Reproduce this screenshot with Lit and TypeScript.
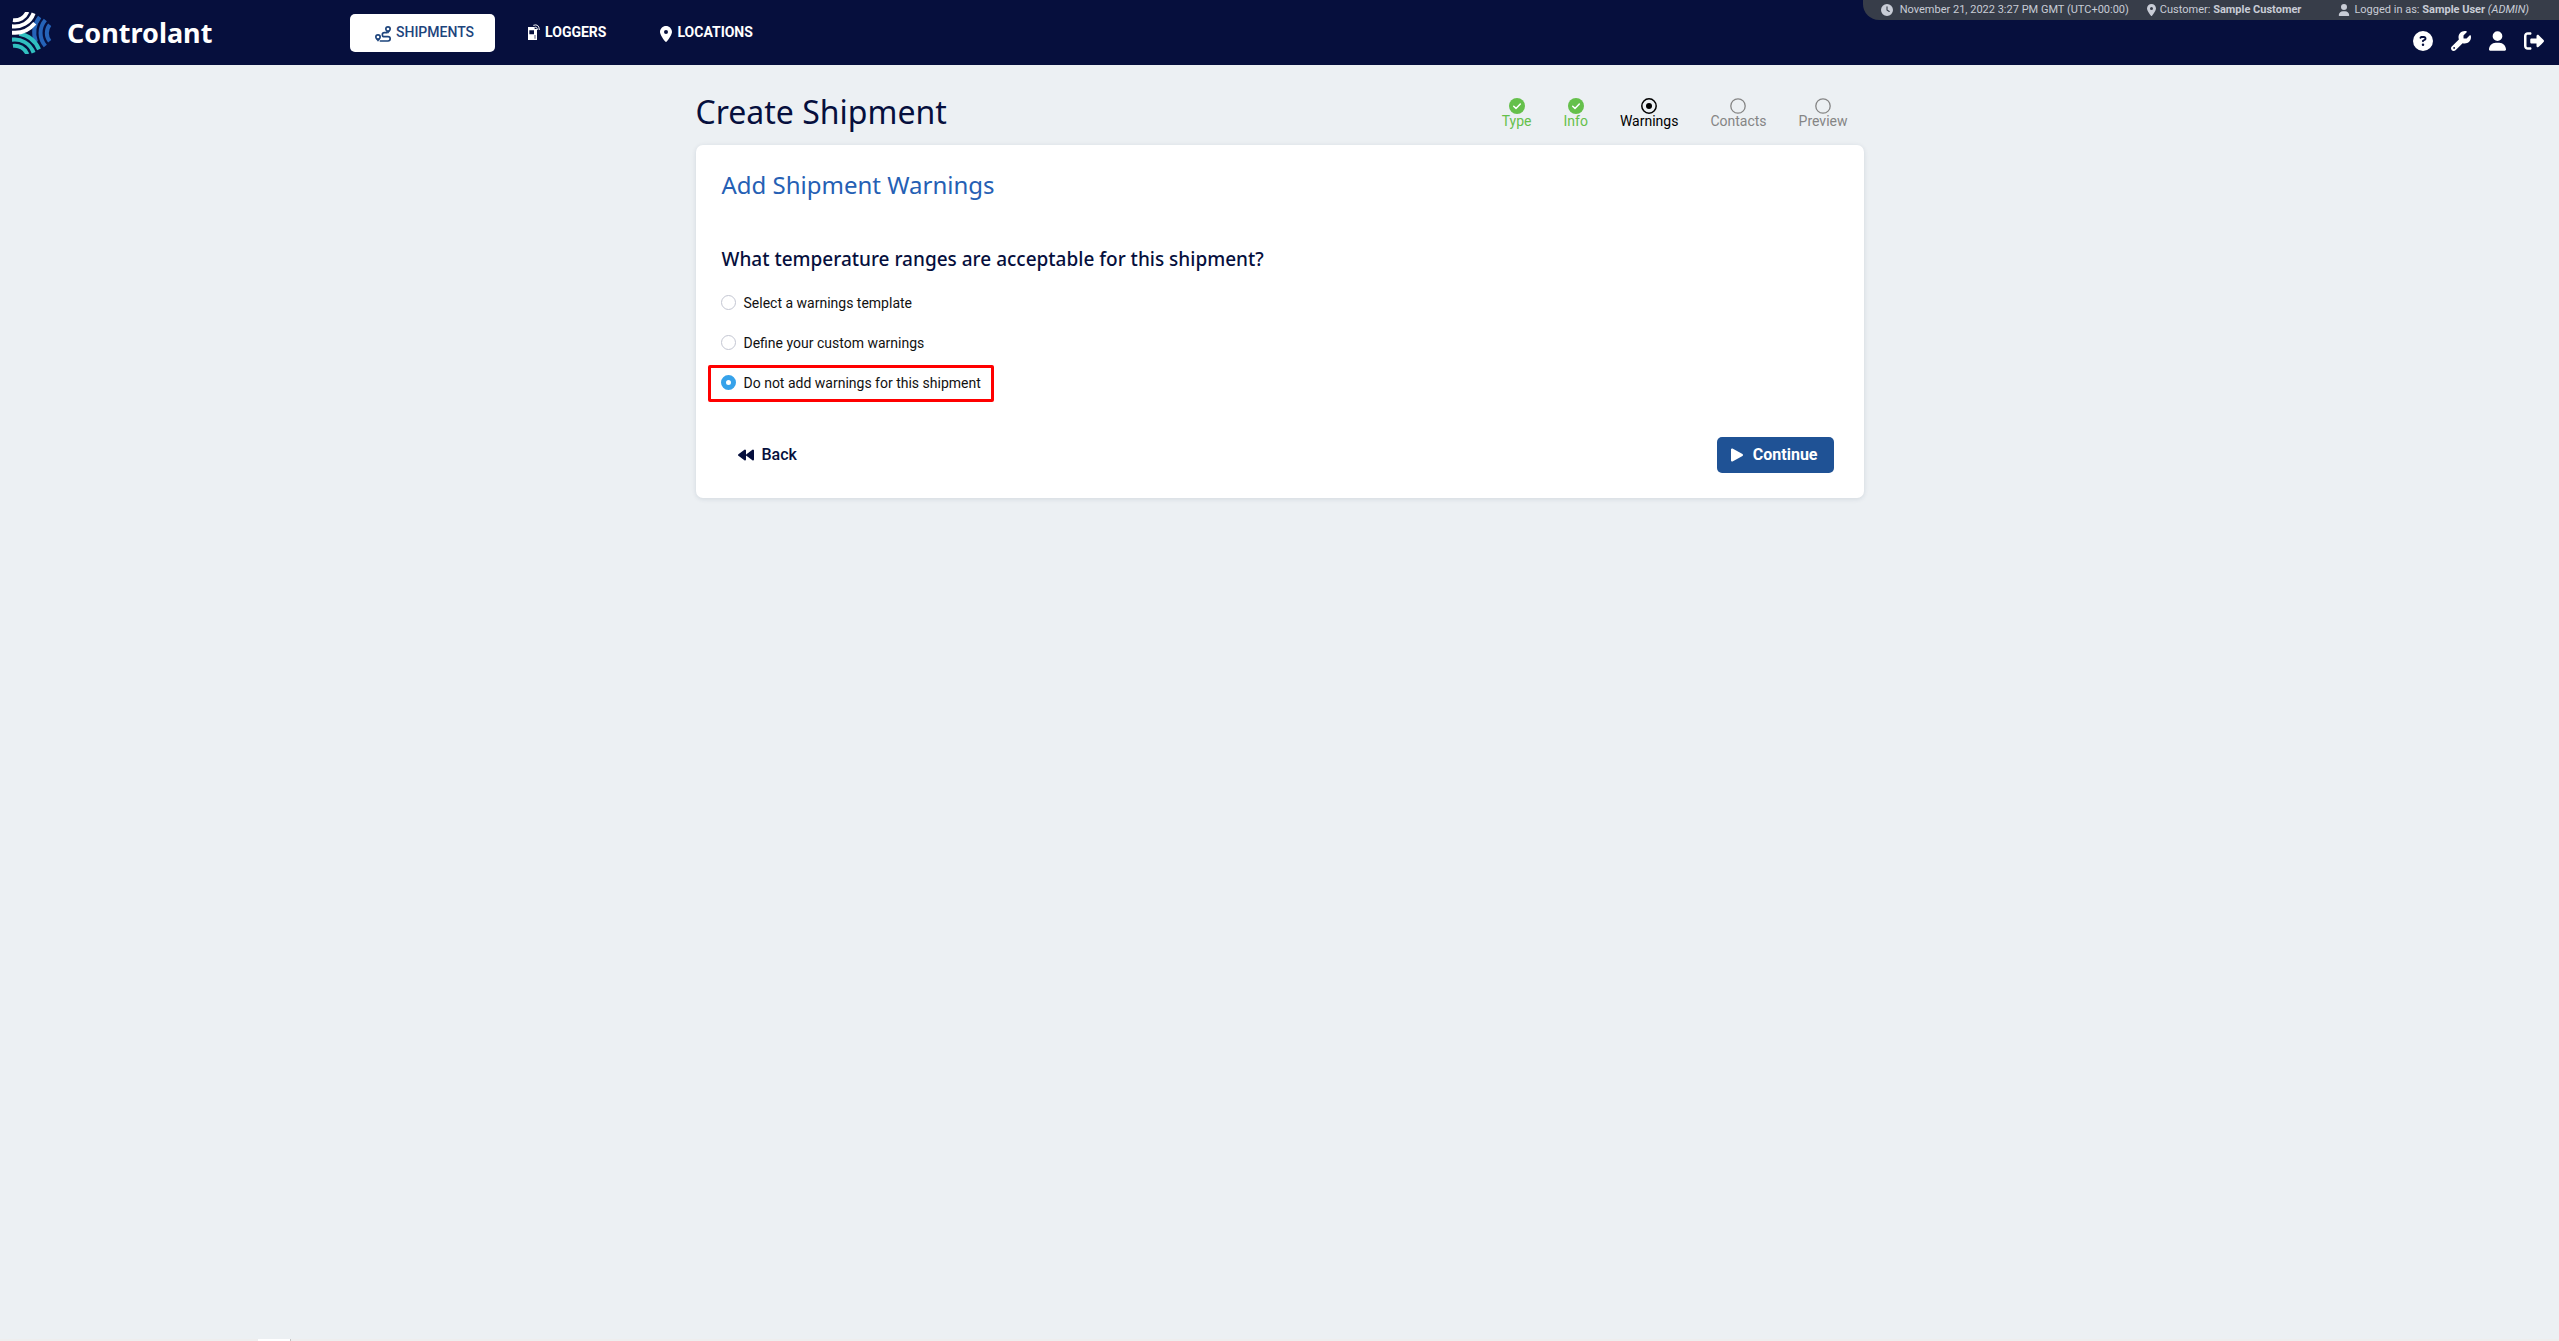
import { LitElement, html, css, svg } from "lit";
import { customElement, property, state } from "lit/decorators.js";

type Glyph = { box: string; art: unknown };

const GLYPHS: Record<string, Glyph> = {
  route: {
    box: "0 0 48 48",
    art: svg`
      <path fill="none" stroke="currentColor" stroke-width="5" stroke-linecap="round" stroke-linejoin="round"
        d="M35 20H28a6 6 0 0 0 0 12H39a6.500 6.500 0 0 1 0 13H16"/>
      <path fill="currentColor" fill-rule="evenodd"
        d="M39 0a9 9 0 0 1 9 9c0 5-6 10-9 14c-3-4-9-9-9-14a9 9 0 0 1 9-9zM39 5a4 4 0 1 0 0 8a4 4 0 0 0 0-8z"/>
      <path fill="currentColor" fill-rule="evenodd"
        d="M9 24a9 9 0 0 1 9 9c0 5-6 10-9 14c-3-4-9-9-9-14a9 9 0 0 1 9-9zM9 29a4 4 0 1 0 0 8a4 4 0 0 0 0-8z"/>`,
  },
  logger: {
    box: "0 0 36 48",
    art: svg`
      <path fill="currentColor" fill-rule="evenodd" d="M0 9H20V15H27V48H0zM4 19V31H18V19zM20 33V44H22V33z"/>
      <path fill="none" stroke="currentColor" stroke-width="3" d="M16 4Q33 -2 34 18M20 10Q28 8 28 18"/>`,
  },
  pin: {
    box: "0 0 384 512",
    art: svg`<path fill="currentColor" d="M215.7 499.2C267 435 384 279.400 384 192C384 86 298 0 192 0S0 86 0 192c0 87.400 117 243 168.300 307.200c12.300 15.300 35.100 15.300 47.400 0zM192 128a64 64 0 1 1 0 128 64 64 0 1 1 0-128z"/>`,
  },
  clock: {
    box: "0 0 512 512",
    art: svg`<path fill="currentColor" fill-rule="evenodd" d="M256 0a256 256 0 1 1 0 512A256 256 0 1 1 256 0zM232 120V256c0 8 4 15.500 10.700 20l96 64c11 7.400 25.900 4.400 33.300-6.700s4.400-25.900-6.700-33.300L280 243.200V120c0-13.300-10.700-24-24-24s-24 10.700-24 24z"/>`,
  },
  user: {
    box: "0 0 448 512",
    art: svg`<path fill="currentColor" d="M224 256A128 128 0 1 0 224 0a128 128 0 1 0 0 256zm-45.700 48C79.800 304 0 383.800 0 482.300C0 498.700 13.300 512 29.700 512H418.300c16.400 0 29.700-13.300 29.700-29.700C448 383.800 368.200 304 269.700 304H178.300z"/>`,
  },
  help: {
    box: "0 0 512 512",
    art: svg`<path fill="currentColor" fill-rule="evenodd" d="M256 512A256 256 0 1 0 256 0a256 256 0 1 0 0 512zM169.800 165.300c7.900-22.300 29.100-37.300 52.800-37.300h58.300c34.900 0 63.100 28.300 63.100 63.100c0 22.600-12.100 43.500-31.700 54.800L280 264.400c-.2 13-10.900 23.600-24 23.600c-13.300 0-24-10.700-24-24V250.500c0-8.600 4.600-16.500 12.100-20.800l44.300-25.400c4.700-2.700 7.600-7.700 7.600-13.100c0-8.400-6.800-15.100-15.100-15.100H222.600c-3.400 0-6.400 2.100-7.500 5.300l-.4 1.200c-4.400 12.500-18.200 19-30.600 14.600s-19-18.200-14.600-30.600l.4-1.200zM224 352a32 32 0 1 1 64 0 32 32 0 1 1-64 0z"/>`,
  },
  wrench: {
    box: "0 0 512 512",
    art: svg`<path fill="currentColor" d="M352 320c88.400 0 160-71.600 160-160c0-15.300-2.200-30.100-6.200-44.200c-3.100-10.800-16.400-13.200-24.300-5.300l-76.800 76.800c-3 3-7.100 4.700-11.300 4.700H336c-8.800 0-16-7.200-16-16V118.600c0-4.200 1.700-8.300 4.700-11.300l76.800-76.800c7.900-7.900 5.400-21.200-5.300-24.300C382.100 2.200 367.300 0 352 0C263.600 0 192 71.600 192 160c0 19.100 3.400 37.500 9.500 54.500L19.900 396.100C7.200 408.800 0 426.100 0 444.100C0 481.600 30.400 512 67.900 512c18 0 35.300-7.200 48-19.900L297.500 310.500c17 6.200 35.400 9.500 54.500 9.500zM80 408a24 24 0 1 1 0 48 24 24 0 1 1 0-48z"/>`,
  },
  exit: {
    box: "0 0 512 512",
    art: svg`<path fill="currentColor" d="M377.900 105.900L500.700 228.700c7.200 7.200 11.300 17.100 11.300 27.300s-4.100 20.100-11.300 27.300L377.900 406.100c-6.400 6.400-15 9.900-24 9.900c-18.700 0-33.900-15.200-33.900-33.900l0-62.100-128 0c-17.700 0-32-14.300-32-32l0-64c0-17.700 14.300-32 32-32l128 0 0-62.100c0-18.700 15.200-33.900 33.900-33.900c9 0 17.600 3.600 24 9.900zM160 96L96 96c-17.700 0-32 14.300-32 32l0 256c0 17.700 14.300 32 32 32l64 0c17.700 0 32 14.300 32 32s-14.300 32-32 32l-64 0c-53 0-96-43-96-96L0 128C0 75 43 32 96 32l64 0c17.700 0 32 14.300 32 32s-14.300 32-32 32z"/>`,
  },
  done: {
    box: "0 0 16 16",
    art: svg`<circle cx="8" cy="8" r="8" fill="currentColor"/>
      <path d="M4.700 8.200L7 10.400L11.300 6" fill="none" stroke="#fff" stroke-width="1.500" stroke-linecap="round" stroke-linejoin="round"/>`,
  },
  current: {
    box: "0 0 16 16",
    art: svg`<circle cx="8" cy="8" r="7.200" fill="none" stroke="currentColor" stroke-width="1.500"/>
      <circle cx="8" cy="8" r="3" fill="currentColor"/>`,
  },
  pending: {
    box: "0 0 16 16",
    art: svg`<circle cx="8" cy="8" r="7.200" fill="none" stroke="currentColor" stroke-width="1.300"/>`,
  },
  back: {
    box: "0 0 16 12",
    art: svg`<path fill="currentColor" stroke="currentColor" stroke-width="2" stroke-linejoin="round" d="M7 1.500V10.500L1 6zM15 1.500V10.500L9 6z"/>`,
  },
  play: {
    box: "0 0 12 14",
    art: svg`<path fill="currentColor" stroke="currentColor" stroke-width="2" stroke-linejoin="round" d="M1 1.500V12.500L11 7z"/>`,
  },
};

@customElement("ui-icon")
export class UiIcon extends LitElement {
  @property() name = "user";
  static styles = css`
    :host { display: block; flex: none; }
    .art { display: block; width: 100%; height: 100%; overflow: visible; }
  `;
  render() {
    const glyph = GLYPHS[this.name];
    return html`<svg class="art" viewBox=${glyph.box} aria-hidden="true">${glyph.art}</svg>`;
  }
}

const swirl = (turn: number, color: string) => svg`
  <g transform="rotate(${turn})" stroke=${color} fill="none" stroke-width="12">
    <path d="M59 -25A41 41 0 0 0 59 25"/>
    <path d="M46 -39A60 60 0 0 0 46 39"/>
    <path d="M29 -48A79 79 0 0 0 18 27"/>
  </g>`;

@customElement("app-root")
export class AppRoot extends LitElement {
  @state() private choice = "none";

  private nav = [
    { label: "SHIPMENTS", icon: "route", active: true },
    { label: "LOGGERS", icon: "logger", active: false },
    { label: "LOCATIONS", icon: "pin", active: false },
  ];
  private steps = [
    { label: "Type", status: "done" },
    { label: "Info", status: "done" },
    { label: "Warnings", status: "current" },
    { label: "Contacts", status: "pending" },
    { label: "Preview", status: "pending" },
  ];
  private options = [
    { id: "template", label: "Select a warnings template" },
    { id: "custom", label: "Define your custom warnings" },
    { id: "none", label: "Do not add warnings for this shipment" },
  ];

  static styles = css`
    :host {
      display: flex;
      flex-direction: column;
      min-height: 100vh;
      background: #ecf0f3;
      color: #111;
      font: 14px/16px Roboto, "Liberation Sans", sans-serif;
    }
    a { color: inherit; text-decoration: none; }
    button { border: 0; margin: 0; padding: 0; background: none; color: inherit; font: inherit; cursor: pointer; }

    .top { display: flex; height: 65px; background: #060f3d; color: #fff; }
    .brand {
      display: flex;
      align-items: center;
      gap: 15px;
      box-sizing: border-box;
      flex: 0 0 350px;
      padding: 0 0 0 12px;
      font: 700 27px/32px "Noto Sans", "Open Sans", sans-serif;
    }
    .mark { width: 40px; height: 42px; }
    .nav { display: flex; align-items: center; gap: 8px; }
    .tab {
      display: flex;
      align-items: center;
      gap: 5px;
      box-sizing: border-box;
      height: 38px;
      padding: 0 21px 2px 25px;
      border-radius: 5px;
      font-weight: 700;
    }
    .tab.active { background: #fff; color: #1d447c; font-weight: 500; }
    .tab-icon { width: 12px; height: 16px; }
    .tab-icon.route { width: 16px; padding-top: 4px; }
    .tab-icon.pin { padding-top: 4px; }
    .side { display: flex; flex-direction: column; align-items: flex-end; margin-left: auto; }
    .status {
      display: flex;
      align-items: center;
      height: 20px;
      padding: 0 30px 0 18px;
      border-bottom-left-radius: 16px;
      background: #373d49;
      color: #c8ccd6;
      font-size: 11px;
    }
    .fact { display: flex; align-items: center; gap: 4px; }
    .fact.time { gap: 7px; margin-right: 18px; }
    .fact.customer { margin-right: 37px; }
    .fact-icon { width: 12px; height: 12px; }
    .fact-icon.narrow { width: 9px; }
    .tools { display: flex; gap: 18px; padding: 11px 15px 0 0; }
    .tool-icon { width: 20px; height: 20px; }
    .tool-icon.user { width: 17px; }

    .page { flex: 1; width: 100%; max-width: 1168px; margin: 0 auto; }
    .head { display: flex; align-items: flex-end; justify-content: space-between; height: 80px; }
    .title { margin: 0; padding-bottom: 13px; color: #060f3d; font: 400 32px/40px "Noto Sans", sans-serif; }
    .steps { display: flex; gap: 32px; margin: 0; padding: 0 16px 17px 0; list-style: none; line-height: 14px; }
    .step { display: flex; flex-direction: column; align-items: center; color: #858585; }
    .step.done { color: #65c04b; }
    .step.current { color: #000; }
    .step-icon { width: 16px; height: 16px; }

    .card {
      display: flex;
      flex-direction: column;
      box-sizing: border-box;
      padding: 24px 30px 25px 12px;
      border-radius: 7px;
      background: #fff;
      box-shadow: 0 1px 5px rgba(20, 40, 70, 0.12);
    }
    .subtitle { margin: 0; padding-left: 14px; color: #2560b4; font: 400 24px/32px "Noto Sans", sans-serif; }
    .group { min-width: 0; margin: 44px 0 0; padding: 0; border: 0; }
    .question { padding: 0 0 12px 14px; color: #060f3d; font: 500 19px/28px "Noto Sans", sans-serif; }
    .options { display: flex; flex-direction: column; align-items: flex-start; gap: 3px; }
    .option {
      display: flex;
      align-items: center;
      gap: 8px;
      box-sizing: border-box;
      height: 37px;
      padding: 0 10px 2px;
      border: 3px solid transparent;
      border-radius: 2px;
    }
    .option.marked { border-color: #f00; }
    .radio {
      appearance: none;
      box-sizing: border-box;
      width: 15px;
      height: 15px;
      margin: 0;
      border: 1px solid #c3c6d2;
      border-radius: 50%;
      background: #fff;
    }
    .radio:checked { border: 5px solid #36a2ea; }
    .actions { display: flex; align-items: center; justify-content: space-between; margin-top: 35px; padding-left: 30px; }
    .back, .continue { display: flex; align-items: center; height: 36px; font-size: 16px; line-height: 20px; }
    .back { gap: 8px; color: #060f3d; font-weight: 500; }
    .continue { gap: 10px; padding: 0 16px 0 14px; border-radius: 5px; background: #1f5295; color: #fff; font-weight: 700; }
    .back-icon { width: 16px; height: 12px; }
    .play-icon { width: 12px; height: 14px; }

    .edge { display: flex; height: 2px; padding-left: 258px; background: #eeeeee; }
    .edge-tab { width: 32px; border-right: 1px solid #c4c4c4; background: #fff; }
  `;

  render() {
    return html`
      <header class="top">
        <a class="brand" href="#">
          <svg class="mark" viewBox="36 36 120 126" aria-hidden="true">
            <g transform="translate(90 99)">
              ${swirl(0, "#2563b8")} ${swirl(120, "#30bfc0")} ${swirl(240, "#ffffff")}
            </g>
          </svg>
          <span>Controlant</span>
        </a>
        <nav class="nav">
          ${this.nav.map(
            (t) => html`<a class="tab ${t.active ? "active" : ""}" href="#">
              <ui-icon class="tab-icon ${t.icon}" name=${t.icon}></ui-icon>${t.label}</a>`
          )}
        </nav>
        <div class="side">
          <div class="status">
            <span class="fact time"><ui-icon class="fact-icon" name="clock"></ui-icon>November 21, 2022 3:27 PM GMT (UTC+00:00)</span>
            <span class="fact customer"><ui-icon class="fact-icon narrow" name="pin"></ui-icon><span>Customer: <b>Sample Customer</b></span></span>
            <span class="fact"><ui-icon class="fact-icon" name="user"></ui-icon><span>Logged in as: <b>Sample User</b> <i>(ADMIN)</i></span></span>
          </div>
          <div class="tools">
            ${[["help", "Help"], ["wrench", "Settings"], ["user", "Profile"], ["exit", "Log out"]].map(
              ([icon, name]) => html`<button class="tool" aria-label=${name}><ui-icon class="tool-icon ${icon}" name=${icon}></ui-icon></button>`
            )}
          </div>
        </div>
      </header>
      <main class="page">
        <div class="head">
          <h1 class="title">Create Shipment</h1>
          <ol class="steps">
            ${this.steps.map(
              (s) => html`<li class="step ${s.status}"><ui-icon class="step-icon" name=${s.status}></ui-icon>${s.label}</li>`
            )}
          </ol>
        </div>
        <section class="card">
          <h2 class="subtitle">Add Shipment Warnings</h2>
          <fieldset class="group">
            <legend class="question">What temperature ranges are acceptable for this shipment?</legend>
            <div class="options">
              ${this.options.map(
                (o) => html`<label class="option ${this.choice === o.id ? "marked" : ""}" for=${o.id}>
                  <input class="radio" type="radio" name="warnings" id=${o.id} .checked=${this.choice === o.id}
                    @change=${() => (this.choice = o.id)} />${o.label}</label>`
              )}
            </div>
          </fieldset>
          <div class="actions">
            <button class="back"><ui-icon class="back-icon" name="back"></ui-icon>Back</button>
            <button class="continue"><ui-icon class="play-icon" name="play"></ui-icon>Continue</button>
          </div>
        </section>
      </main>
      <footer class="edge"><span class="edge-tab"></span></footer>
    `;
  }
}
